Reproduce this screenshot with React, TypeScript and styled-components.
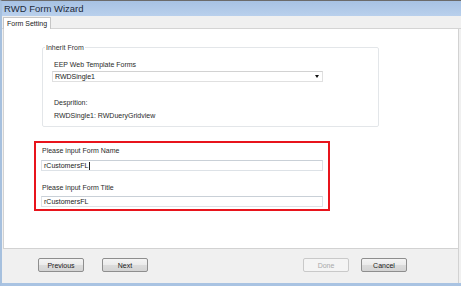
import React from 'react';
import styled, { createGlobalStyle } from 'styled-components';

const GlobalStyle = createGlobalStyle`
    html, body {
        margin: 0;
        padding: 0;
        background: #ffffff;
    }
    body {
        font-family: "Liberation Sans", Arial, sans-serif;
    }
`;

const Window = styled.div`
    width: 461px;
    height: 286px;
    box-sizing: border-box;
    display: flex;
    flex-direction: column;
    background: #f0f0f0;
    border-top: 1px solid #6b6b6b;
    border-left: 2px solid #a6c0de;
    border-bottom: 3px solid #a9c3e2;
    overflow: hidden;
`;

const TitleBar = styled.div`
    height: 15px;
    flex: 0 0 15px;
    display: flex;
    align-items: center;
    padding-left: 2px;
    background: linear-gradient(to bottom, #a7c2e4, #b9d0ec);
    color: #1e2a3a;
    font-size: 9.5px;
`;

const TabStrip = styled.div`
    height: 12px;
    flex: 0 0 12px;
    display: flex;
    align-items: flex-end;
    padding-left: 1px;
    border-bottom: 1px solid #d4d4d4;
`;

const Tab = styled.div`
    height: 11px;
    padding: 0 3px;
    display: flex;
    align-items: center;
    background: #ffffff;
    border: 1px solid #c6c6c6;
    border-bottom: none;
    font-size: 7px;
    color: #222;
    margin-bottom: -1px;
`;

const Panel = styled.div`
    flex: 0 0 220px;
    margin-left: 1px;
    margin-right: 2px;
    background: #ffffff;
    border-left: 1px solid #d2d2d2;
    border-right: 1px solid #d2d2d2;
    border-bottom: 1px solid #d2d2d2;
    padding: 15px 0 0 30px;
    box-sizing: border-box;
`;

const GroupBox = styled.fieldset`
    width: 337px;
    height: 83px;
    box-sizing: border-box;
    margin: 0 0 0 8px;
    padding: 4px 0 0 11px;
    border: 1px solid #e3e6e9;
    border-radius: 2px;
`;

const Legend = styled.legend`
    font-size: 7px;
    color: #333;
    padding: 0 1px;
    margin-left: -9px;
`;

const Label = styled.div`
    font-size: 7px;
    color: #2b2b2b;
    height: 9px;
    line-height: 9px;
`;

const SelectBox = styled.div`
    width: 271px;
    height: 11px;
    box-sizing: border-box;
    margin: 2px 0 0 -2px;
    border: 1px solid #e0e0e0;
    border-top-color: #d2d2d2;
    display: flex;
    align-items: center;
    justify-content: space-between;
    padding: 0 3px 0 2px;
    font-size: 7px;
    color: #222;
`;

const Arrow = styled.span`
    width: 0;
    height: 0;
    border-left: 2.5px solid transparent;
    border-right: 2.5px solid transparent;
    border-top: 3px solid #111;
`;

const Spacer = styled.div<{ $h: number }>`
    height: ${p => p.$h}px;
`;

const RedBox = styled.div`
    width: 296px;
    height: 70px;
    box-sizing: border-box;
    margin-top: 14px;
    border: 2px solid #e8141c;
    padding: 3px 0 0 6px;
`;

const TextInput = styled.div`
    width: 282px;
    height: 11px;
    box-sizing: border-box;
    margin-left: -1px;
    border: 1px solid #dde2e7;
    border-top-color: #c9d0d7;
    display: flex;
    align-items: center;
    padding-left: 2px;
    font-size: 7px;
    color: #222;
`;

const Caret = styled.span`
    display: inline-block;
    width: 1px;
    height: 8px;
    background: #222;
    margin-left: 0.5px;
`;

const Footer = styled.div`
    flex: 1;
    display: flex;
    align-items: center;
    padding: 0 0 2px 36px;
    margin-right: 2px;
    border-right: 1px solid #d2d2d2;
`;

const Button = styled.div<{ $gap?: number; $disabled?: boolean }>`
    width: 46px;
    height: 14px;
    box-sizing: border-box;
    margin-left: ${p => p.$gap ?? 0}px;
    display: flex;
    align-items: center;
    justify-content: center;
    font-size: 7px;
    color: ${p => (p.$disabled ? '#a9a9a9' : '#1a1a1a')};
    border: 1px solid ${p => (p.$disabled ? '#c9c9c9' : '#8e8e8e')};
    border-radius: 2px;
    background: ${p =>
        p.$disabled
            ? '#f4f4f4'
            : 'linear-gradient(to bottom, #f4f4f4 0%, #ebebeb 50%, #dcdcdc 51%, #d4d4d4 100%)'};
`;

export default function App() {
    return (
        <>
            <GlobalStyle />
            <Window>
                <TitleBar>RWD Form Wizard</TitleBar>
                <TabStrip>
                    <Tab>Form Setting</Tab>
                </TabStrip>
                <Panel>
                    <GroupBox>
                        <Legend>Inherit From</Legend>
                        <Spacer $h={5} />
                        <Label>EEP Web Template Forms</Label>
                        <SelectBox>
                            <span>RWDSingle1</span>
                            <Arrow />
                        </SelectBox>
                        <Spacer $h={16} />
                        <Label>Desprition:</Label>
                        <Spacer $h={4} />
                        <Label>RWDSingle1: RWDueryGridview</Label>
                    </GroupBox>
                    <RedBox>
                        <Label>Please input Form Name</Label>
                        <Spacer $h={5} />
                        <TextInput>
                            rCustomersFL<Caret />
                        </TextInput>
                        <Spacer $h={12} />
                        <Label>Please input Form Title</Label>
                        <Spacer $h={4} />
                        <TextInput>rCustomersFL</TextInput>
                    </RedBox>
                </Panel>
                <Footer>
                    <Button>Previous</Button>
                    <Button $gap={18}>Next</Button>
                    <Button $gap={155} $disabled>Done</Button>
                    <Button $gap={12}>Cancel</Button>
                </Footer>
            </Window>
        </>
    );
}
